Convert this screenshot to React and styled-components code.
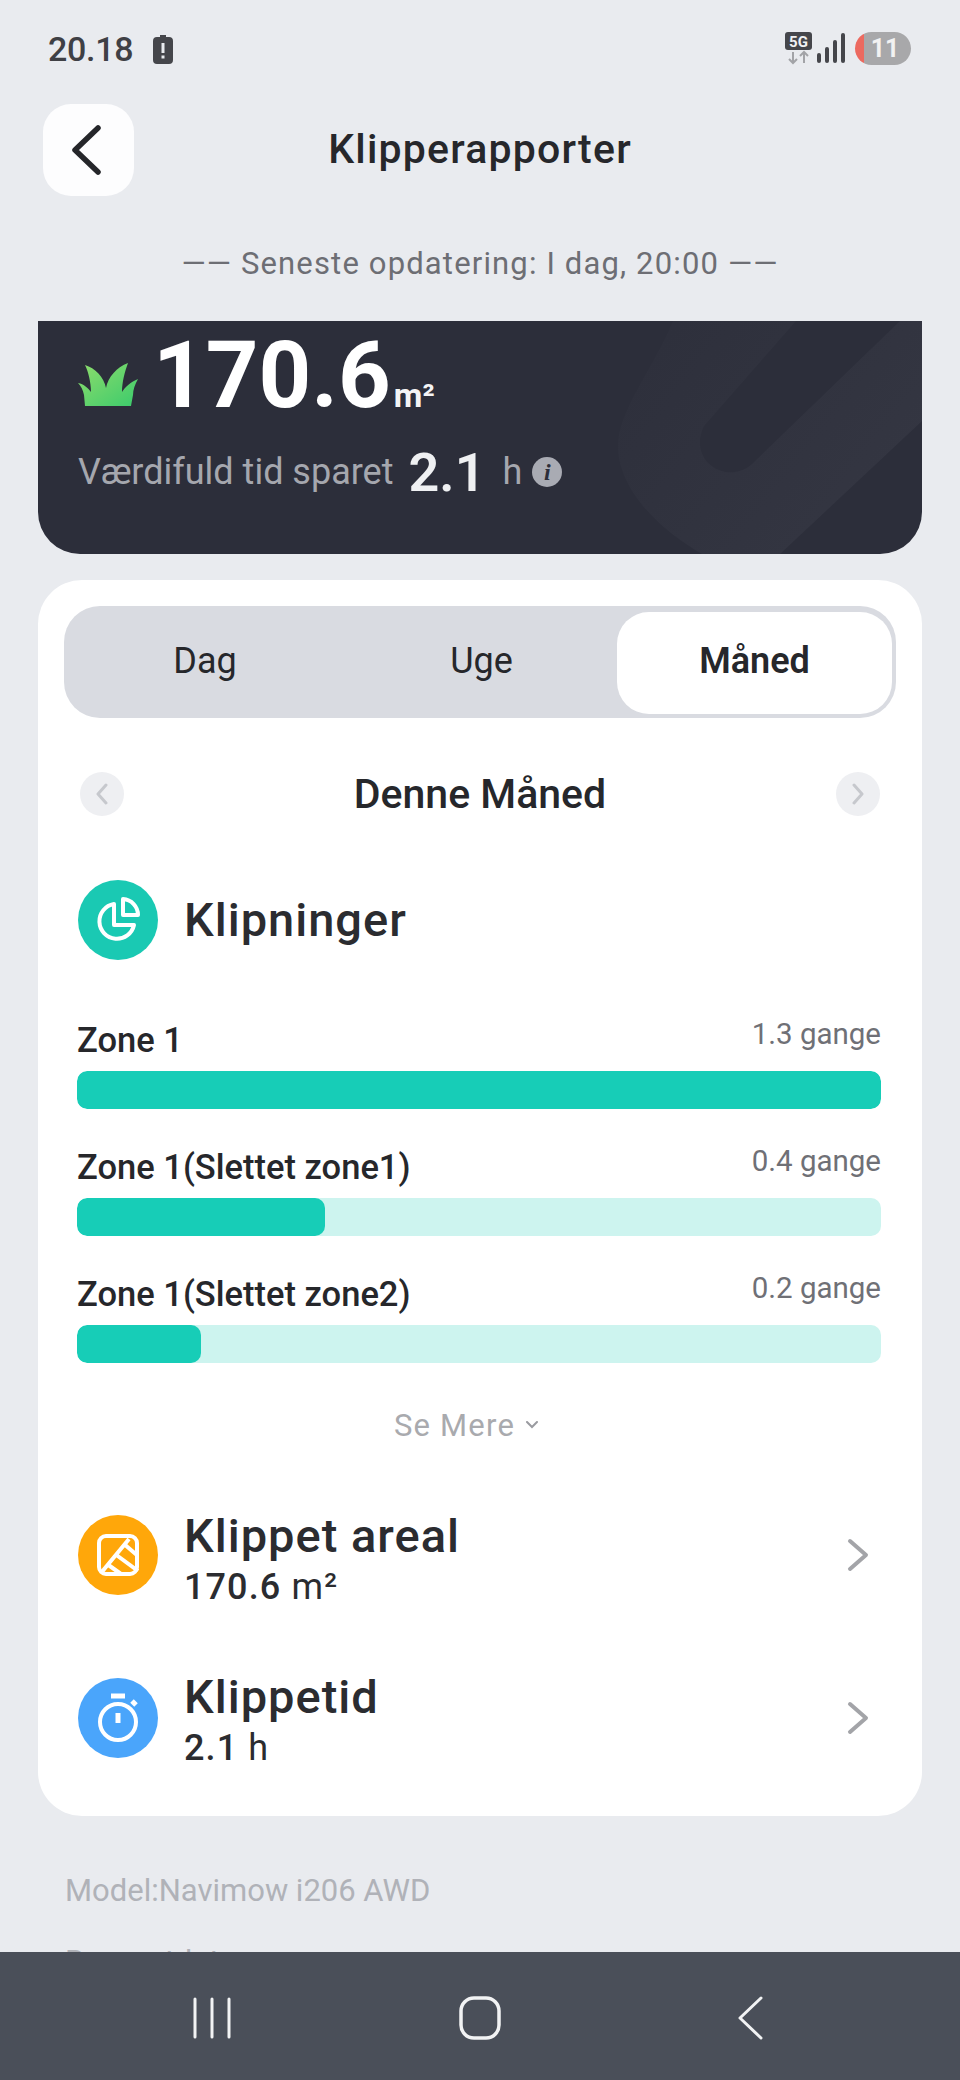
import React from 'react';
import styled, { createGlobalStyle } from 'styled-components';

const GlobalStyle = createGlobalStyle`
  html, body { margin: 0; padding: 0; background: #e9ebef; }
  * { box-sizing: border-box; }
`;

const Screen = styled.div`
  width: 960px;
  height: 2080px;
  display: flex;
  flex-direction: column;
  background: #e9ebef;
  font-family: Roboto, "Liberation Sans", sans-serif;
  color: #26272b;
  overflow: hidden;
`;

const Scroll = styled.div`
  flex: 1;
  min-height: 0;
  overflow: hidden;
`;

const StatusBar = styled.div`
  height: 98px;
  padding: 28px 49px 0 48px;
  display: flex;
  justify-content: space-between;
  align-items: flex-start;
`;

const StatusLeft = styled.div`
  display: flex;
  align-items: center;
  gap: 20px;
  height: 42px;
`;

const Clock = styled.span`
  font-size: 34px;
  font-weight: 500;
  letter-spacing: -0.3px;
  color: #3f4045;
`;

const StatusRight = styled.div`
  display: flex;
  align-items: flex-start;
  gap: 5px;
  padding-top: 4px;
`;

const BatteryPill = styled.div`
  width: 56px;
  height: 33px;
  margin-left: 5px;
  border-radius: 17px;
  display: flex;
  align-items: center;
  justify-content: center;
  padding-left: 4px;
  font-size: 25px;
  font-weight: 700;
  color: #f2f2f2;
  background: linear-gradient(90deg, #ec6a60 0 9px, #a8a8aa 9px);
`;

const Header = styled.div`
  display: grid;
  grid-template-columns: 91px 1fr 91px;
  align-items: center;
  padding: 6px 43px 0;
  height: 98px;
`;

const BackButton = styled.button`
  width: 91px;
  height: 92px;
  border: 0;
  padding: 0 6px 0 0;
  border-radius: 28px;
  background: #fdfdfe;
  display: flex;
  align-items: center;
  justify-content: center;
`;

const Title = styled.h1`
  margin: 0 0 2px;
  font-size: 41px;
  font-weight: 500;
  letter-spacing: 1.2px;
  text-align: center;
  color: #26272b;
`;

const Updated = styled.div`
  margin-top: 48px;
  height: 40px;
  line-height: 40px;
  text-align: center;
  font-size: 31px;
  letter-spacing: 1.15px;
  color: #6d6e74;
`;

const Hero = styled.section`
  position: relative;
  margin: 37px 38px 0;
  height: 233px;
  padding: 0 40px;
  overflow: hidden;
  background: #2c2e3a;
  border-radius: 0 0 42px 42px;
`;

const HeroArt = styled.svg`
  position: absolute;
  top: 0;
  right: 0;
`;

const HeroArea = styled.div`
  position: relative;
  height: 86px;
  display: flex;
  align-items: flex-start;
`;

const GrassIcon = styled.svg`
  flex: none;
  margin-top: 42px;
`;

const HeroNumber = styled.span`
  margin-left: 15px;
  font-size: 92px;
  line-height: 110px;
  font-weight: 700;
  color: #fff;
`;

const HeroUnit = styled.span`
  margin: 52px 0 0 3px;
  font-size: 33px;
  font-weight: 700;
  line-height: 46px;
  color: #f4f4f5;
`;

const SavedRow = styled.div`
  position: relative;
  margin-top: 40px;
  display: flex;
  align-items: center;
  height: 50px;
  color: #a5a7ae;
  font-size: 36px;
`;

const SavedValue = styled.span`
  margin: 0 17px 0 15px;
  font-size: 54px;
  font-weight: 600;
  color: #eff0f2;
`;

const InfoDot = styled.span`
  margin-left: 10px;
  width: 30px;
  height: 30px;
  border-radius: 50%;
  background: #a9abb3;
  color: #2c2e3a;
  display: flex;
  align-items: center;
  justify-content: center;
  font-family: "Liberation Serif", serif;
  font-style: italic;
  font-weight: 700;
  font-size: 24px;
`;

const Card = styled.section`
  margin: 26px 38px 0;
  height: 1236px;
  padding: 26px 26px 0;
  background: #fff;
  border-radius: 44px;
`;

const Tabs = styled.div`
  height: 112px;
  padding: 6px 4px 4px 0;
  display: grid;
  grid-template-columns: 282px 271px 1fr;
  background: #d9dbe1;
  border-radius: 36px;
`;

const Tab = styled.div`
  display: flex;
  align-items: center;
  justify-content: center;
  padding-bottom: 4px;
  font-size: 36px;
  font-weight: ${(p) => (p.$active ? 600 : 400)};
  color: #26272b;
  border-radius: 32px;
  background: ${(p) => (p.$active ? '#fff' : 'transparent')};
`;

const PeriodRow = styled.div`
  margin-top: 54px;
  padding: 0 16px;
  height: 44px;
  display: flex;
  align-items: center;
  justify-content: space-between;
`;

const PeriodName = styled.div`
  font-size: 41px;
  font-weight: 500;
  color: #26272b;
`;

const NavDot = styled.span`
  width: 44px;
  height: 44px;
  border-radius: 50%;
  background: #eeeff2;
  display: flex;
  align-items: center;
  justify-content: center;
`;

const Section = styled.div`
  padding: 0 15px 0 13px;
`;

const MetricHead = styled.div`
  margin-top: 64px;
  height: 80px;
  display: flex;
  align-items: center;
  gap: 26px;
  padding-left: 1px;
`;

const IconCircle = styled.span`
  flex: none;
  width: 80px;
  height: 80px;
  border-radius: 50%;
  background: ${(p) => p.$color};
  display: flex;
  align-items: center;
  justify-content: center;
`;

const MetricTitle = styled.div`
  font-size: 47px;
  font-weight: 500;
  letter-spacing: 1px;
  line-height: 56px;
  color: #2b2c30;
`;

const ZoneList = styled.div`
  margin-top: 49px;
  display: flex;
  flex-direction: column;
  gap: 27px;
`;

const ZoneLabels = styled.div`
  height: 62px;
  display: flex;
  justify-content: space-between;
`;

const ZoneName = styled.span`
  margin-top: 11px;
  font-size: 34.5px;
  font-weight: 500;
  line-height: 40px;
  color: #26272b;
`;

const ZoneCount = styled.span`
  margin-top: 7px;
  font-size: 29.5px;
  line-height: 36px;
  color: #6f7076;
`;

const Track = styled.div`
  height: 38px;
  border-radius: 10px;
  background: #cdf4ef;
  overflow: hidden;
`;

const Fill = styled.div`
  height: 100%;
  border-radius: 10px;
  background: #17cdb7;
`;

const SeeMore = styled.div`
  margin-top: 42px;
  height: 40px;
  padding-right: 26px;
  display: flex;
  align-items: center;
  justify-content: center;
  gap: 11px;
  font-size: 31px;
  letter-spacing: 1.2px;
  color: #a9aaae;
`;

const MetricRow = styled.div`
  height: 100px;
  margin-top: ${(p) => p.$top}px;
  padding-left: 1px;
  display: flex;
  align-items: center;
  gap: 26px;
`;

const MetricText = styled.div`
  flex: 1;
  display: flex;
  flex-direction: column;
  padding-top: ${(p) => p.$shift}px;
`;

const MetricValue = styled.div`
  font-size: 36px;
  line-height: 46px;
  font-weight: 500;
  letter-spacing: 1.1px;
  color: #2b2c30;
  span { font-weight: 400; }
`;

const Chevron = styled.svg`
  flex: none;
  margin-right: 12px;
`;

const Footnote = styled.div`
  margin: ${(p) => p.$top}px 65px 0;
  font-size: 31px;
  line-height: 36px;
  color: #b0b2b8;
`;

const NavBar = styled.nav`
  flex: none;
  height: 128px;
  background: #4a4f59;
  display: flex;
  align-items: center;
  padding: 4px 0 0 193px;
`;

const NavIcon = styled.svg`
  flex: none;
  margin-left: ${(p) => p.$left || 0}px;
`;

const zones = [
  { name: 'Zone 1', count: '1.3 gange', width: 100 },
  { name: 'Zone 1(Slettet zone1)', count: '0.4 gange', width: 30.8 },
  { name: 'Zone 1(Slettet zone2)', count: '0.2 gange', width: 15.4 },
];

const SmallChevron = ({ flip }) => (
  <svg width="14" height="22" viewBox="0 0 14 22" fill="none">
    <path
      d={flip ? 'M3 2l8 9-8 9' : 'M11 2l-8 9 8 9'}
      stroke="#c6c8cd"
      strokeWidth="3"
      strokeLinecap="round"
      strokeLinejoin="round"
    />
  </svg>
);

const RowChevron = () => (
  <Chevron width="22" height="34" viewBox="0 0 22 34" fill="none">
    <path d="M3 3l16 14-16 14" stroke="#a3a4a8" strokeWidth="4" strokeLinecap="round" strokeLinejoin="round" />
  </Chevron>
);

const Grass = () => (
  <GrassIcon width="60" height="44" viewBox="0 0 60 44">
    <defs>
      <linearGradient id="grass" x1="0" y1="0" x2="1" y2="1">
        <stop offset="0" stopColor="#8fdc6c" />
        <stop offset="1" stopColor="#3bcb6c" />
      </linearGradient>
    </defs>
    <path
      d="M7 43L6 32C5 27 3 23 0 20C6 21 10 25 13 29C13 19 10 8 7 2C17 5 26 14 28 25C30 14 39 4 50 0C47 8 44 19 44 29C47 24 53 19 60 16C57 21 55 27 55 32L53 43Z"
      fill="url(#grass)"
    />
  </GrassIcon>
);

const StatusIcons = () => (
  <>
    <svg width="27" height="33" viewBox="0 0 27 33">
      <rect width="27" height="18" rx="3" fill="#45464b" />
      <text x="13.5" y="14.5" textAnchor="middle" fontFamily="Roboto, sans-serif" fontSize="15" fontWeight="700" fill="#f0f1f3">5G</text>
      <path d="M8 20v11M4 27l4 4 4-4M19 31V20M15 24l4-4 4 4" fill="none" stroke="#a2a3a7" strokeWidth="2" />
    </svg>
    <svg width="28" height="32" viewBox="0 0 28 32">
      <rect x="0" y="21" width="4" height="10" rx="2" fill="#45464b" />
      <rect x="8" y="15" width="4" height="16" rx="2" fill="#45464b" />
      <rect x="16" y="8" width="4" height="23" rx="2" fill="#45464b" />
      <rect x="24" y="1" width="4" height="30" rx="2" fill="#45464b" />
    </svg>
  </>
);

export default function App() {
  return (
    <Screen>
      <GlobalStyle />
      <Scroll>
        <StatusBar>
          <StatusLeft>
            <Clock>20.18</Clock>
            <svg width="20" height="29" viewBox="0 0 20 29">
              <path d="M7 0h6v2h3a4 4 0 0 1 4 4v19a4 4 0 0 1-4 4H4a4 4 0 0 1-4-4V6a4 4 0 0 1 4-4h3z" fill="#45464b" />
              <rect x="8.5" y="8" width="3" height="10" fill="#e9ebef" />
              <rect x="8.5" y="20.5" width="3" height="3" fill="#e9ebef" />
            </svg>
          </StatusLeft>
          <StatusRight>
            <StatusIcons />
            <BatteryPill>11</BatteryPill>
          </StatusRight>
        </StatusBar>

        <Header>
          <BackButton aria-label="Tilbage">
            <svg width="30" height="50" viewBox="0 0 30 50" fill="none">
              <path d="M27 3L4 25l23 22" stroke="#25262a" strokeWidth="5.500" strokeLinecap="round" strokeLinejoin="round" />
            </svg>
          </BackButton>
          <Title>Klipperapporter</Title>
        </Header>

        <Updated>—— Seneste opdatering: I dag, 20:00 ——</Updated>

        <Hero>
          <HeroArt width="320" height="233" viewBox="0 0 320 233" fill="none">
            <defs>
              <linearGradient id="heroShape" x1="0" y1="0" x2="1" y2="0.6">
                <stop offset="0" stopColor="#2d2f3b" />
                <stop offset="1" stopColor="#343642" />
              </linearGradient>
            </defs>
            <path
              d="M71 0C50 50 16 90 16 125C16 170 60 210 100 233H178L320 100V0H298L150 143C125 165 85 140 102 105L194 0Z"
              fill="url(#heroShape)"
            />
          </HeroArt>
          <HeroArea>
            <Grass />
            <HeroNumber>170.6</HeroNumber>
            <HeroUnit>m²</HeroUnit>
          </HeroArea>
          <SavedRow>
            Værdifuld tid sparet
            <SavedValue>2.1</SavedValue>
            h
            <InfoDot>i</InfoDot>
          </SavedRow>
        </Hero>

        <Card>
          <Tabs>
            <Tab>Dag</Tab>
            <Tab>Uge</Tab>
            <Tab $active>Måned</Tab>
          </Tabs>
          <PeriodRow>
            <NavDot><SmallChevron /></NavDot>
            <PeriodName>Denne Måned</PeriodName>
            <NavDot><SmallChevron flip /></NavDot>
          </PeriodRow>

          <Section>
            <MetricHead>
              <IconCircle $color="#1ac9b3">
                <svg width="48" height="48" viewBox="0 0 48 48" fill="none" stroke="#fff" strokeWidth="4" strokeLinejoin="round" strokeLinecap="round">
                  <path d="M20 8A17.500 17.500 0 1 0 40 29H20Z" />
                  <path d="M29 3A16 16 0 0 1 44 19H29Z" />
                </svg>
              </IconCircle>
              <MetricTitle>Klipninger</MetricTitle>
            </MetricHead>

            <ZoneList>
              {zones.map((zone) => (
                <div key={zone.name}>
                  <ZoneLabels>
                    <ZoneName>{zone.name}</ZoneName>
                    <ZoneCount>{zone.count}</ZoneCount>
                  </ZoneLabels>
                  <Track>
                    <Fill style={{ width: `${zone.width}%` }} />
                  </Track>
                </div>
              ))}
            </ZoneList>

            <SeeMore>
              Se Mere
              <svg width="12" height="8" viewBox="0 0 12 8" fill="none">
                <path d="M1 1l5 5 5-5" stroke="#9a9ba0" strokeWidth="2" strokeLinecap="round" />
              </svg>
            </SeeMore>

            <MetricRow $top={60}>
              <IconCircle $color="#ffa70a">
                <svg width="42" height="42" viewBox="0 0 42 42" fill="none">
                  <rect x="2" y="2" width="38" height="38" rx="7" stroke="#fff" strokeWidth="4" />
                  <path d="M4 39L32 5M27 10l14 12M18 20l23 17M10 30l14 10" stroke="#fff" strokeWidth="4" />
                </svg>
              </IconCircle>
              <MetricText $shift={7}>
                <MetricTitle>Klippet areal</MetricTitle>
                <MetricValue>170.6 <span>m²</span></MetricValue>
              </MetricText>
              <RowChevron />
            </MetricRow>

            <MetricRow $top={63}>
              <IconCircle $color="#4aa5fb">
                <svg width="42" height="50" viewBox="0 0 42 50" fill="none" stroke="#fff">
                  <circle cx="21" cy="29" r="18" strokeWidth="4" />
                  <path d="M14 3h14" strokeWidth="5" />
                  <path d="M35 8l4 4" strokeWidth="5" />
                  <path d="M21 20v10" strokeWidth="5" />
                </svg>
              </IconCircle>
              <MetricText $shift={3}>
                <MetricTitle>Klippetid</MetricTitle>
                <MetricValue>2.1 <span>h</span></MetricValue>
              </MetricText>
              <RowChevron />
            </MetricRow>
          </Section>
        </Card>

        <Footnote $top={57}>Model:Navimow i206 AWD</Footnote>
        <Footnote $top={35}>Rapportdato</Footnote>
      </Scroll>

      <NavBar>
        <NavIcon width="38" height="42" viewBox="0 0 38 42" stroke="#f2f3f4" strokeWidth="3" strokeLinecap="round">
          <path d="M2 2v38M19 2v38M36 2v38" />
        </NavIcon>
        <NavIcon $left={228} width="42" height="44" viewBox="0 0 42 44" fill="none">
          <rect x="2" y="2" width="38" height="40" rx="13" stroke="#f2f3f4" strokeWidth="3.500" />
        </NavIcon>
        <NavIcon $left={236} width="26" height="44" viewBox="0 0 26 44" fill="none">
          <path d="M24 2L3 22l21 20" stroke="#f2f3f4" strokeWidth="3" strokeLinecap="round" strokeLinejoin="round" />
        </NavIcon>
      </NavBar>
    </Screen>
  );
}
